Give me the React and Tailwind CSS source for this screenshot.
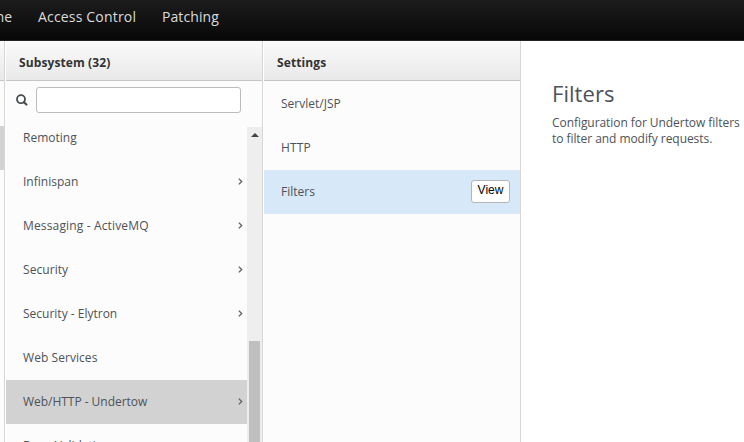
import React from "react";

const subsystems = [
  { name: "Remoting" },
  { name: "Infinispan", nested: true },
  { name: "Messaging - ActiveMQ", nested: true, tracking: "tracking-[0.15px]" },
  { name: "Security", nested: true, tracking: "tracking-[0.06px]" },
  { name: "Security - Elytron", nested: true },
  { name: "Web Services", tracking: "tracking-[0.06px]" },
  { name: "Web/HTTP - Undertow", nested: true, selected: true, tracking: "tracking-[-0.03px]" },
  { name: "Bean Validation" },
];

const settings = [
  { name: "Servlet/JSP" },
  { name: "HTTP", tracking: "tracking-[0.15px]" },
  { name: "Filters", selected: true },
];

function Chevron() {
  return (
    <svg className="mr-[4px] mb-[2px] h-[7px] w-[5px]" viewBox="0 0 5 7" fill="none" stroke="#5c5f64" strokeWidth="1.3">
      <path d="M0.8 0.6 L3.7 3.5 L0.8 6.4" />
    </svg>
  );
}

function ColumnHeader({ children }) {
  return (
    <div className="h-10 shrink-0 border-b border-[#c6c6c6] bg-linear-to-b from-[#fafafa] to-[#e9e9e9] pt-px text-[12px] leading-[42px] font-bold text-[#333]">
      {children && <span className="ml-[13px] tracking-[0.1px]">{children}</span>}
    </div>
  );
}

function SubsystemColumn() {
  return (
    <section className="flex w-[257px] shrink-0 flex-col border-r border-[#d6d6d6] bg-[#fcfcfc]">
      <ColumnHeader>Subsystem (32)</ColumnHeader>
      <div className="flex h-[46px] shrink-0 items-start pt-[6px] pl-[10px]">
        <svg className="mt-[7px] h-[12px] w-[12px]" viewBox="0 0 12 12" fill="none" stroke="#454c52">
          <circle cx="5" cy="5.2" r="4" strokeWidth="1.8" />
          <path d="M7.9 8.2 L10.4 10.6" strokeWidth="2.1" strokeLinecap="round" />
        </svg>
        <input className="ml-[8px] h-[26px] w-[205px] rounded-[3px] border border-[#bbb] bg-white px-2 text-[12px] outline-none" />
      </div>
      <div className="flex min-h-0 flex-1">
        <ul className="-mt-[11px] min-w-0 flex-1">
          {subsystems.map((item) => (
            <li
              key={item.name}
              className={`flex h-11 items-center justify-between pl-[17px] ${item.selected ? "bg-[#d2d2d2]" : ""}`}
            >
              <span className={item.tracking}>{item.name}</span>
              {item.nested && <Chevron />}
            </li>
          ))}
        </ul>
        <div className="flex w-[15px] shrink-0 flex-col items-center bg-[#eee]">
          <svg className="mt-[6px] h-[4px] w-[8px]" viewBox="0 0 8 4" fill="#444">
            <path d="M4 0 L8 4 H0 Z" />
          </svg>
          <div className="mt-[204px] w-[11px] flex-1 bg-[#bfbfbf]" />
        </div>
      </div>
    </section>
  );
}

function SettingsColumn() {
  return (
    <section className="ml-px flex w-[257px] shrink-0 flex-col border-r border-[#d6d6d6] bg-[#fcfcfc]">
      <ColumnHeader>Settings</ColumnHeader>
      <ul className="pt-px">
        {settings.map((item) => (
          <li
            key={item.name}
            className={`flex h-11 items-center justify-between pr-[10px] pl-[17px] ${item.selected ? "bg-[#d7e8f8]" : ""}`}
          >
            <span className={item.tracking}>{item.name}</span>
            {item.selected && (
              <button className="-mt-px h-[23px] w-[39px] rounded-[3px] border border-[#b5b5b5] bg-white pb-[3px] font-['Liberation_Sans',sans-serif] text-[12px] leading-[18px] text-black">
                View
              </button>
            )}
          </li>
        ))}
      </ul>
    </section>
  );
}

export default function App() {
  return (
    <div className="flex h-[442px] w-[744px] flex-col overflow-hidden bg-white font-['Open_Sans',sans-serif] text-[12px] text-[#4d5258]">
      <nav className="flex h-[41px] shrink-0 border-b border-[#242024] bg-linear-to-b from-[#1c1c1c] to-[#080808] text-[14px] leading-[34px] text-[#dbdbdb]">
        <div className="flex w-[12px] shrink-0 justify-end">
          <span>Runtime</span>
        </div>
        <a className="ml-[26px] w-[98px] tracking-[0.18px] whitespace-nowrap">Access Control</a>
        <a className="ml-[26px] tracking-[0.08px]">Patching</a>
      </nav>
      <main className="flex min-h-0 flex-1">
        <div className="flex w-[5px] shrink-0 flex-col border-r border-[#d6d6d6] bg-[#fcfcfc]">
          <ColumnHeader />
          <div className="mt-[45px] h-11 bg-[#d2d2d2]" />
        </div>
        <div className="w-px shrink-0" />
        <SubsystemColumn />
        <SettingsColumn />
        <section className="flex-1 pt-[37px] pl-[31px]">
          <h1 className="text-[22px] leading-[30px] tracking-[0.05px]">Filters</h1>
          <p className="mt-[7px] w-[192px] leading-[16px] tracking-[-0.06px]">
            Configuration for Undertow filters to filter and modify requests.
          </p>
        </section>
      </main>
    </div>
  );
}
